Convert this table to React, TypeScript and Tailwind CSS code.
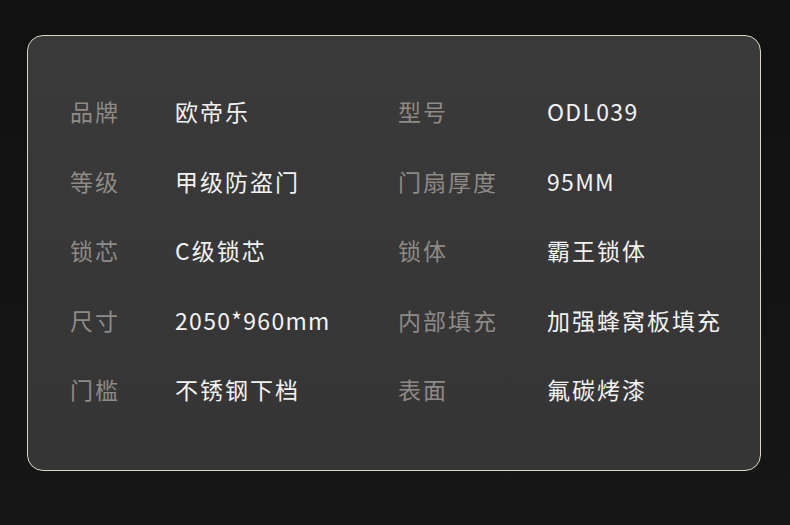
import React from "react";

const rows: [string, string, string, string][] = [
  ["品牌", "欧帝乐", "型号", "ODL039"],
  ["等级", "甲级防盗门", "门扇厚度", "95MM"],
  ["锁芯", "C级锁芯", "锁体", "霸王锁体"],
  ["尺寸", "2050*960mm", "内部填充", "加强蜂窝板填充"],
  ["门槛", "不锈钢下档", "表面", "氟碳烤漆"],
];

const latin = (s: string) => /^[\x00-\x7f]+$/.test(s);

export default function App() {
  return (
    <div
      className="w-[790px] h-[525px] bg-gradient-to-b from-[#111111] to-[#161616] pt-[35px] pl-[27px]"
      style={{ fontFamily: '"Noto Sans CJK SC", "Noto Sans", sans-serif' }}
    >
      <div className="w-[734px] h-[436px] rounded-[16px] border border-[#dcd4c4] bg-gradient-to-b from-[#3a3a3a] to-[#353535] pt-[41px]">
        {rows.map((r, i) => (
          <div key={i} className="flex items-center h-[69.5px] text-[23px] tracking-[2px] leading-none">
            <div className="w-[147px] pl-[42px] text-[#8f8a85]">{r[0]}</div>
            <div className={`w-[223px] text-[#f2f2f2] ${latin(r[1]) ? "tracking-[1.3px]" : ""}`}>{r[1]}</div>
            <div className="w-[149px] text-[#8f8a85]">{r[2]}</div>
            <div className={`text-[#f2f2f2] ${latin(r[3]) ? "tracking-[1.3px]" : ""}`}>{r[3]}</div>
          </div>
        ))}
      </div>
    </div>
  );
}
